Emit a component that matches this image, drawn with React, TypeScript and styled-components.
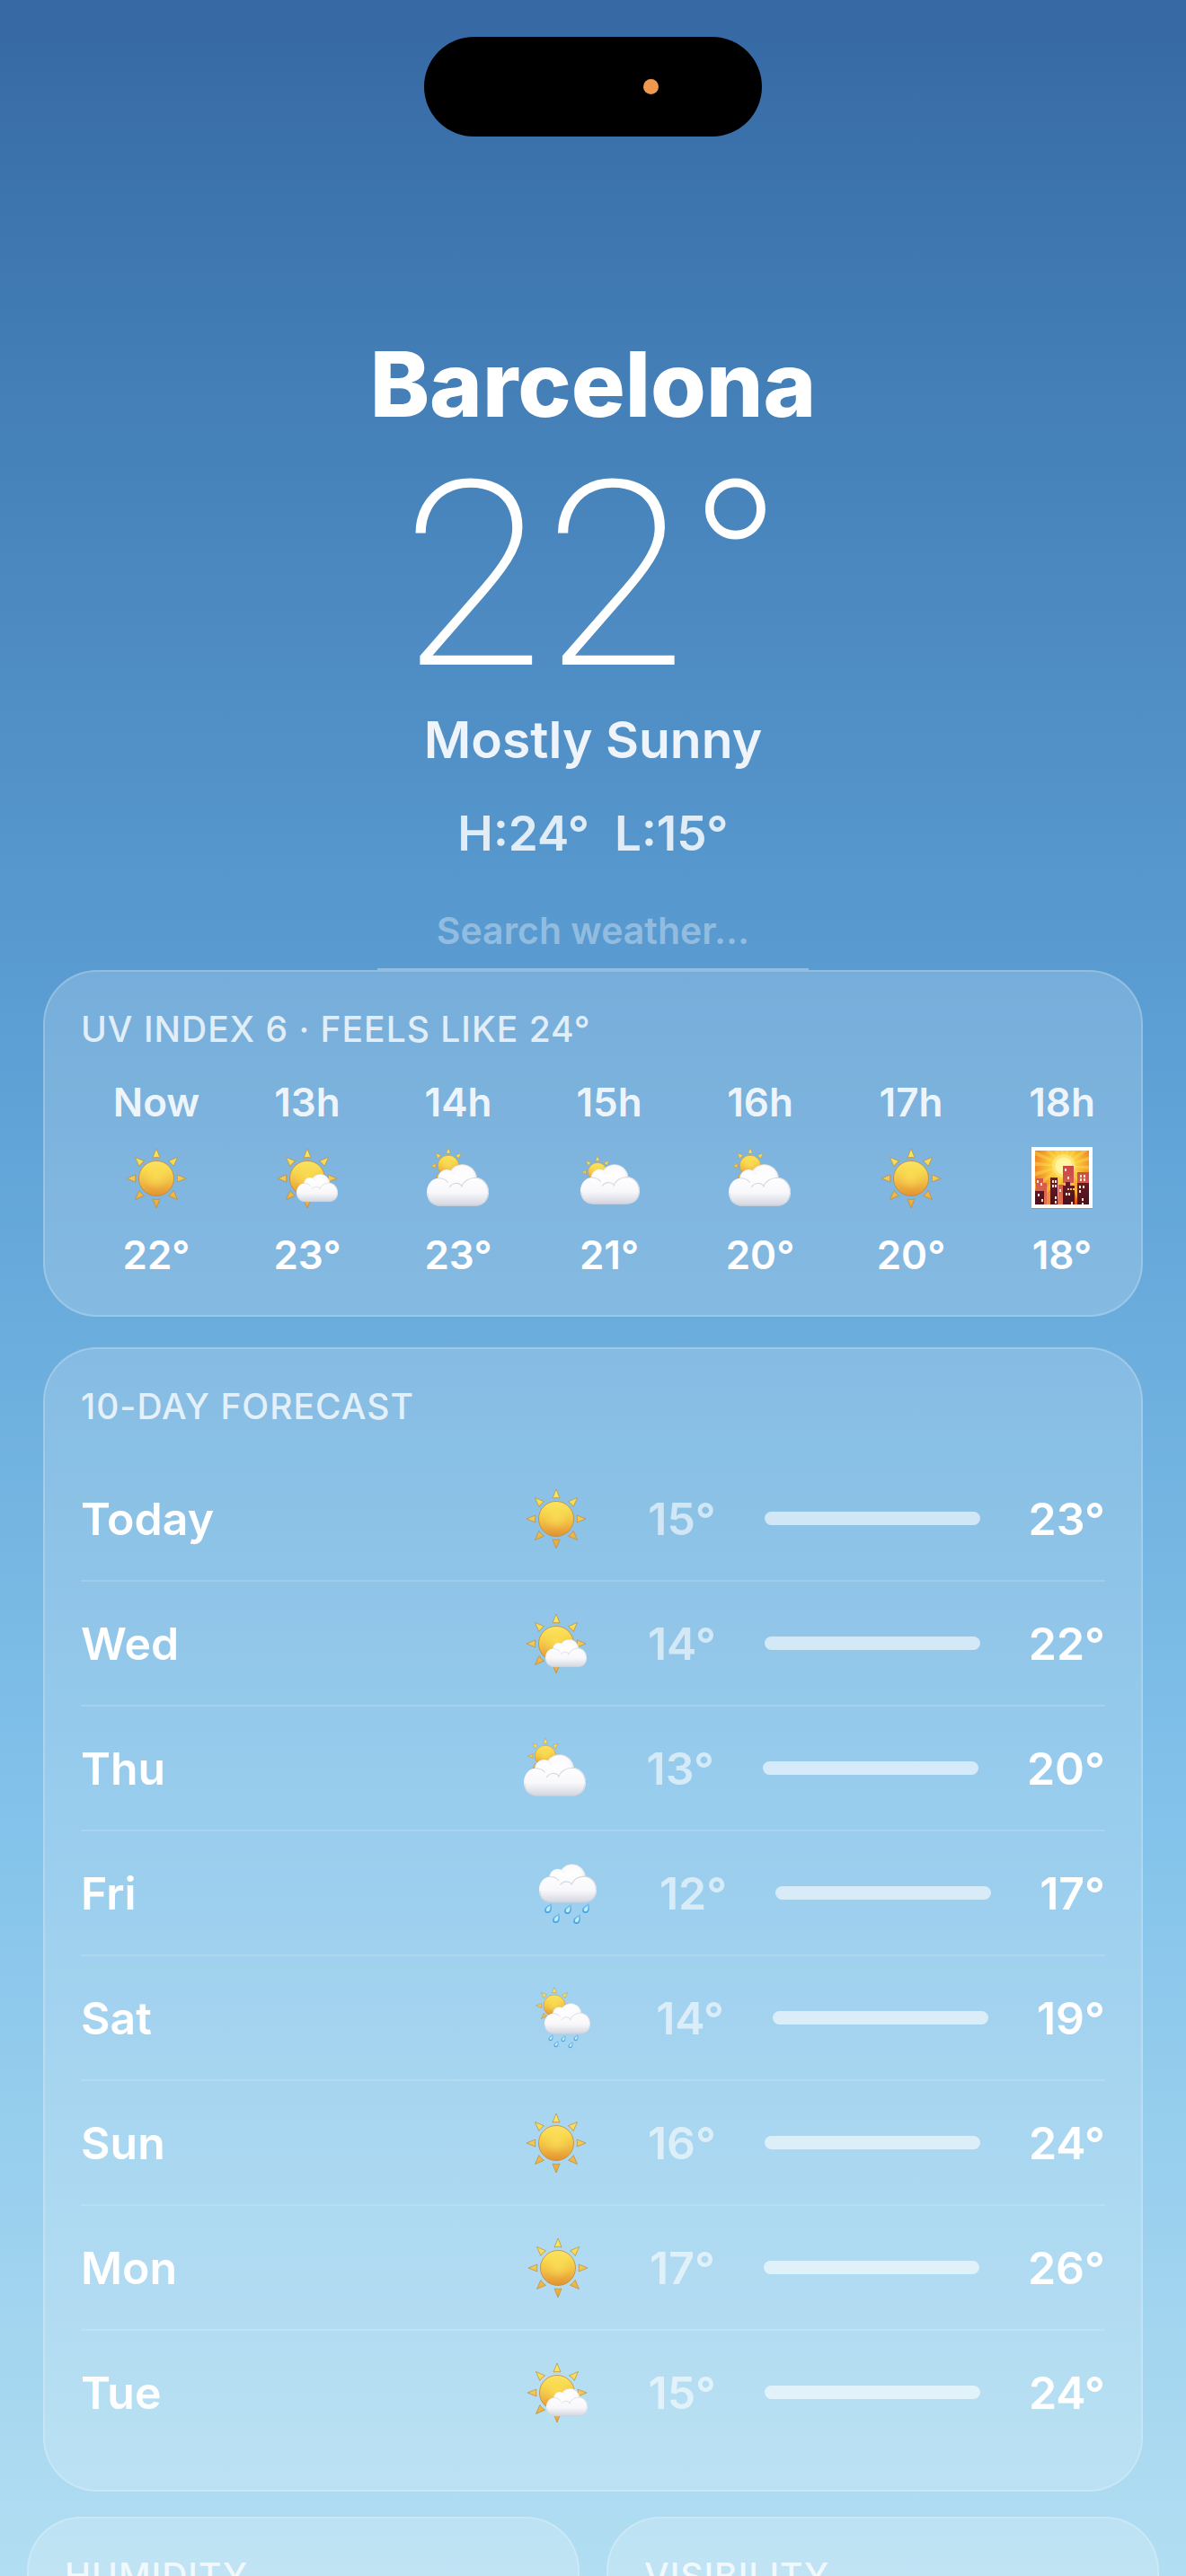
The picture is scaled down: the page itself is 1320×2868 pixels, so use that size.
import React from "react";
import styled, { createGlobalStyle } from "styled-components";

type Condition = "sunny" | "mostlySunny" | "partlyCloudy" | "mostlyCloudy" | "rain" | "showers" | "sunset";

const hourly: { time: string; condition: Condition; temp: number }[] = [
  { time: "Now", condition: "sunny", temp: 22 },
  { time: "13h", condition: "mostlySunny", temp: 23 },
  { time: "14h", condition: "partlyCloudy", temp: 23 },
  { time: "15h", condition: "mostlyCloudy", temp: 21 },
  { time: "16h", condition: "partlyCloudy", temp: 20 },
  { time: "17h", condition: "sunny", temp: 20 },
  { time: "18h", condition: "sunset", temp: 18 },
];

const daily: { day: string; condition: Condition; low: number; high: number }[] = [
  { day: "Today", condition: "sunny", low: 15, high: 23 },
  { day: "Wed", condition: "mostlySunny", low: 14, high: 22 },
  { day: "Thu", condition: "partlyCloudy", low: 13, high: 20 },
  { day: "Fri", condition: "rain", low: 12, high: 17 },
  { day: "Sat", condition: "showers", low: 14, high: 19 },
  { day: "Sun", condition: "sunny", low: 16, high: 24 },
  { day: "Mon", condition: "sunny", low: 17, high: 26 },
  { day: "Tue", condition: "mostlySunny", low: 15, high: 24 },
];

const GlobalStyle = createGlobalStyle`
  *, *::before, *::after { box-sizing: border-box; }
  body {
    margin: 0;
    font-family: Inter, "Liberation Sans", sans-serif;
    color: #fff;
  }
  h1, h2, p, ul { margin: 0; padding: 0; }
  ul { list-style: none; }
`;

const Screen = styled.div`
  height: 100vh;
  overflow-x: hidden;
  overflow-y: auto;
  scrollbar-width: none;
  background: linear-gradient(180deg, #3668a3 0%, #3e77b0 9%, #5c9fd4 40%, #82c2ea 70%, #b2def2 100%);
`;

const StatusBar = styled.div`
  display: flex;
  justify-content: center;
  padding-top: 41px;
`;

const Island = styled.div`
  display: flex;
  align-items: center;
  justify-content: flex-end;
  width: 376px;
  height: 111px;
  padding-right: 115px;
  border-radius: 56px;
  background: #000;
`;

const MicDot = styled.span`
  width: 17px;
  height: 17px;
  border-radius: 50%;
  background: #f0984e;
`;

const Header = styled.header`
  display: flex;
  flex-direction: column;
  align-items: center;
  padding-top: 216px;
`;

const City = styled.h1`
  font-size: 100px;
  line-height: 120px;
  font-weight: 800;
`;

const CurrentTemp = styled.p`
  margin-top: 4px;
  font-family: Roboto, Inter, sans-serif;
  font-size: 288px;
  line-height: 300px;
  font-weight: 200;
`;

const Summary = styled.p`
  margin-top: -4px;
  font-size: 57px;
  line-height: 72px;
  font-weight: 600;
  color: rgba(255, 255, 255, 0.9);
`;

const HighLow = styled.p`
  display: flex;
  gap: 28px;
  margin-top: 36px;
  font-size: 53px;
  line-height: 64px;
  font-weight: 600;
  color: rgba(255, 255, 255, 0.82);
`;

const SearchInput = styled.input`
  width: 480px;
  height: 86px;
  margin-top: 34px;
  padding: 0;
  border: 0;
  border-bottom: 2px solid rgba(255, 255, 255, 0.35);
  border-radius: 0;
  background: transparent;
  outline: none;
  font: 600 41px Inter, "Liberation Sans", sans-serif;
  color: #fff;
  text-align: center;

  &::placeholder {
    color: rgba(255, 255, 255, 0.36);
    opacity: 1;
  }
`;

const Panels = styled.main`
  display: flex;
  flex-direction: column;
  gap: 34px;
  padding: 0 48px;
`;

const Card = styled.section`
  padding: 40px;
  border: 2px solid rgba(255, 255, 255, 0.2);
  border-radius: 60px;
  background: rgba(255, 255, 255, 0.18);
`;

const CardTitle = styled.h2`
  font-size: 39px;
  line-height: 48px;
  font-weight: 500;
  letter-spacing: 1px;
  color: rgba(255, 255, 255, 0.8);
`;

const HourList = styled.ul`
  display: flex;
  justify-content: space-between;
  margin-top: 30px;
  padding-left: 36px;
`;

const Hour = styled.li`
  display: flex;
  flex-direction: column;
  align-items: center;
  gap: 22px;
  width: 96px;
  font-size: 44px;
  line-height: 54px;
  font-weight: 600;
`;

const HourTime = styled.span`
  color: rgba(255, 255, 255, 0.9);
`;

const HourTemp = styled.span`
  color: #fff;
`;

const DayList = styled.ul`
  margin-top: 32px;
`;

const DayRow = styled.li`
  display: flex;
  align-items: center;
  gap: 54px;
  height: 139px;
  border-bottom: 2px solid rgba(255, 255, 255, 0.15);
  font-size: 50px;
  line-height: 60px;
  font-weight: 600;

  &:last-child {
    height: 137px;
    border-bottom: 0;
  }
`;

const DayName = styled.span`
  flex: 1;
`;

const DayIcon = styled.span`
  display: flex;
  justify-content: center;
  width: 96px;
`;

const Low = styled.span`
  color: rgba(255, 255, 255, 0.6);
`;

const RangeBar = styled.span`
  width: 240px;
  height: 15px;
  border-radius: 8px;
  background: rgba(255, 255, 255, 0.6);
`;

const Tiles = styled.div`
  display: grid;
  grid-template-columns: 1fr 1fr;
  gap: 30px;
  padding: 28px 30px 48px;
`;

const Tile = styled(Card)`
  min-height: 360px;
`;

const Glyph = styled.svg`
  display: block;
  width: 72px;
  height: 72px;
`;

const SharedDefs = styled.svg`
  position: absolute;
  width: 0;
  height: 0;
`;

const Gradients = () => (
  <SharedDefs aria-hidden="true">
    <defs>
      <linearGradient id="sunDisc" x1="0" y1="0" x2="0" y2="1">
        <stop offset="0" stopColor="#fbe36a" />
        <stop offset="0.25" stopColor="#f8da4e" />
        <stop offset="0.6" stopColor="#f1bd45" />
        <stop offset="1" stopColor="#e3922f" />
      </linearGradient>
      <radialGradient id="sunGlow" cx="0.5" cy="0.42" r="0.4">
        <stop offset="0" stopColor="#fbdf55" stopOpacity="0.8" />
        <stop offset="1" stopColor="#fbdf55" stopOpacity="0" />
      </radialGradient>
      <linearGradient id="sunRays" gradientUnits="userSpaceOnUse" x1="0" y1="-33" x2="0" y2="33">
        <stop offset="0" stopColor="#f9ec62" />
        <stop offset="0.5" stopColor="#f3c853" />
        <stop offset="1" stopColor="#eba93c" />
      </linearGradient>
      <radialGradient id="puff" cx="0.5" cy="0.42" r="0.58">
        <stop offset="0" stopColor="#ffffff" />
        <stop offset="0.65" stopColor="#fbfbfd" />
        <stop offset="1" stopColor="#dddfe8" />
      </radialGradient>
      <linearGradient id="cloudBase" x1="0" y1="0" x2="0" y2="1">
        <stop offset="0" stopColor="#ffffff" />
        <stop offset="0.6" stopColor="#f8f8fb" />
        <stop offset="1" stopColor="#d3d5df" />
      </linearGradient>
      <linearGradient id="drop" x1="0" y1="0" x2="0" y2="1">
        <stop offset="0" stopColor="#74c3f2" />
        <stop offset="1" stopColor="#3f9fe4" />
      </linearGradient>
      <radialGradient id="duskSky" cx="0.53" cy="0.28" r="0.75">
        <stop offset="0" stopColor="#fff27a" />
        <stop offset="0.35" stopColor="#fbc83a" />
        <stop offset="0.7" stopColor="#f08a24" />
        <stop offset="1" stopColor="#dd4e1c" />
      </radialGradient>
      <linearGradient id="towerFar" x1="0" y1="0" x2="0" y2="1">
        <stop offset="0" stopColor="#c8474a" />
        <stop offset="1" stopColor="#e5714f" />
      </linearGradient>
      <linearGradient id="towerNear" x1="0" y1="0" x2="0" y2="1">
        <stop offset="0" stopColor="#6b1c2b" />
        <stop offset="1" stopColor="#48101c" />
      </linearGradient>
    </defs>
  </SharedDefs>
);

const Sun = ({ x = 0, y = 0, scale = 1 }: { x?: number; y?: number; scale?: number }) => (
  <g transform={`translate(${x} ${y}) scale(${scale})`}>
    <path
      d="M0-33L4-23Q0-24-4-23Z M0 33L4 23Q0 24-4 23Z M-33 0L-23-4Q-24 0-23 4Z M33 0L23-4Q24 0 23 4Z M-23.5-23.5L-13.5-19.2Q-17-17-19.2-13.5Z M23.5-23.5L13.5-19.2Q17-17 19.2-13.5Z M-23.5 23.5L-13.5 19.2Q-17 17-19.2 13.5Z M23.5 23.5L13.5 19.2Q17 17 19.2 13.5Z"
      fill="url(#sunRays)"
      stroke="#bd8b37"
      strokeWidth="0.7"
      strokeLinejoin="round"
    />
    <circle r="19.5" fill="url(#sunDisc)" stroke="#c58732" strokeWidth="0.8" />
    <circle r="19" fill="url(#sunGlow)" />
  </g>
);

/* The cloud is drawn on a 68 x 46 field and scaled to the width it needs. */
const Cloud = ({ x, y, width }: { x: number; y: number; width: number }) => (
  <g transform={`translate(${x} ${y}) scale(${width / 68})`}>
    <circle cx="39" cy="16.5" r="16" fill="url(#puff)" stroke="#d0d3dd" strokeWidth="0.5" />
    <circle cx="22" cy="16" r="10" fill="url(#puff)" />
    <path
      d="M15 46C5 46 0 39 0 31C0 23 5 16 12.500 15.500C15 10 22 8 28 12C34 10 41 12 44 17C47 15 50 14.500 53 14.500C62 15 68 22 68 31C68 40 62 46 53 46Z"
      fill="url(#cloudBase)"
    />
    <path d="M12.500 15.500C17 15.500 21 17 23 20M67.500 31C67.500 22 61 15 53 15C45 15.500 40 20 38 25M25 25C29 20 35 20 39 24" fill="none" stroke="#d5d8e1" strokeWidth="1.1" strokeLinecap="round" />
    <path d="M1 32C1 40 7 45.500 15 45.500H53C62 45.500 67 39 67 32" fill="none" stroke="#c9ccd8" strokeWidth="0.9" opacity="0.8" />
  </g>
);

const Drops = ({ points, scale = 1 }: { points: [number, number][]; scale?: number }) => (
  <>
    {points.map(([x, y]) => (
      <g key={`${x},${y}`} transform={`translate(${x} ${y}) scale(${scale})`}>
        <path d="M3.500-6C4.500-1 4.300 5-0.500 5C-4 5-4.800 1.500-3-1C-1.500-3 1.500-4 3.500-6Z" fill="url(#drop)" />
        <path d="M2.200-3.500C2.800 0 2 3.200-0.500 3.200C-2.600 3.200-2.400 0.500-1-1C0-2 1.200-2.400 2.200-3.500Z" fill="#c3ecfb" />
      </g>
    ))}
  </>
);

const rays = Array.from({ length: 18 }, (_, i) => {
  const a = (i * Math.PI) / 9;
  const b = a + 0.14;
  return `M2-14L${2 + 60 * Math.cos(a)} ${-14 + 60 * Math.sin(a)}L${2 + 60 * Math.cos(b)} ${-14 + 60 * Math.sin(b)}Z`;
}).join("");

const CitySunset = () => (
  <>
    <rect x="-34" y="-34" width="68" height="68" fill="#7d7f86" opacity="0.5" />
    <rect x="-34" y="-35" width="68" height="68" fill="#fff" />
    <svg x="-30" y="-31" width="60" height="60" viewBox="-30 -31 60 60">
      <rect x="-30" y="-31" width="60" height="60" fill="url(#duskSky)" />
      <path d={rays} fill="#fde35a" opacity="0.4" />
      <circle cx="2" cy="-14" r="13" fill="#fff08a" opacity="0.5" />
      <circle cx="2" cy="-14" r="9.500" fill="#fff5a3" />
      <path d="M-29 0H-21V5H-17V30H-29Z M-4 7H2V30H-4Z M1-14H13V5H1Z M17-7H30V8H17Z" fill="url(#towerFar)" />
      <path d="M-30 14H-20V30H-30Z M-13-1H-5V30H-13Z M1 8H4V4H9V8H14V30H1Z M17 5H30V30H17Z" fill="url(#towerNear)" />
      <path d="M-17 16H-13V30H-17Z" fill="#ef8b48" />
      <path
        d="M3-11h2v3h-2z M6-2h2v3h-2z M20-4h2v3h-2z M24-4h2v3h-2z M20 0h2v3h-2z M24 0h2v3h-2z M-11 2h2v3h-2z M-8 2h2v3h-2z M-11 7h2v3h-2z M-8 7h2v3h-2z M-27 17h2v3h-2z M-23 23h2v3h-2z M-8 20h2v3h-2z M-8 25h2v3h-2z M4 16h2v3h-2z M7 16h2v3h-2z M10 26h2v3h-2z M19 8h2v3h-2z M23 8h2v3h-2z M19 13h2v3h-2z M22 22h2v3h-2z M22 27h2v2h-2z M-28 2h2v3h-2z M-24 5h2v3h-2z M-3 12h2v3h-2z"
        fill="#ffe2c4"
      />
      <path d="M6 11h2v2h-2z M9 11h2v2h-2z M12 11h2v2h-2z" fill="#f6c34a" />
    </svg>
  </>
);

const drawings: Record<Condition, React.ReactNode> = {
  sunny: <Sun />,
  mostlySunny: (
    <>
      <Sun />
      <Cloud x={-12} y={-5} width={46} />
    </>
  ),
  partlyCloudy: (
    <>
      <Sun x={-11} y={-14} scale={0.6} />
      <Cloud x={-35} y={-16} width={69} />
    </>
  ),
  mostlyCloudy: (
    <>
      <Sun x={-13} y={-7} scale={0.54} />
      <Cloud x={-32} y={-16} width={66} />
    </>
  ),
  rain: (
    <>
      <Cloud x={-32} y={-33} width={64} />
      <Drops points={[[-22, 17], [0, 18], [20, 17], [-13, 28], [10, 29]]} />
    </>
  ),
  showers: (
    <>
      <Sun x={-11} y={-14} scale={0.62} />
      <Cloud x={-22} y={-17} width={51} />
      <Drops points={[[-15, 22], [-1, 23], [13, 22], [-9, 29], [7, 30]]} scale={0.65} />
    </>
  ),
  sunset: <CitySunset />,
};

const WeatherIcon = ({ condition }: { condition: Condition }) => (
  <Glyph viewBox="-36 -36 72 72" aria-hidden="true">
    {drawings[condition]}
  </Glyph>
);

export default function App() {
  return (
    <Screen>
      <GlobalStyle />
      <Gradients />
      <StatusBar>
        <Island>
          <MicDot />
        </Island>
      </StatusBar>
      <Header>
        <City>Barcelona</City>
        <CurrentTemp>22°</CurrentTemp>
        <Summary>Mostly Sunny</Summary>
        <HighLow>
          <span>H:24°</span>
          <span>L:15°</span>
        </HighLow>
        <SearchInput type="text" placeholder="Search weather..." aria-label="Search weather..." />
      </Header>
      <Panels>
        <Card>
          <CardTitle>UV INDEX 6 · FEELS LIKE 24°</CardTitle>
          <HourList>
            {hourly.map((hour) => (
              <Hour key={hour.time}>
                <HourTime>{hour.time}</HourTime>
                <WeatherIcon condition={hour.condition} />
                <HourTemp>{hour.temp}°</HourTemp>
              </Hour>
            ))}
          </HourList>
        </Card>
        <Card>
          <CardTitle>10-DAY FORECAST</CardTitle>
          <DayList>
            {daily.map((row) => (
              <DayRow key={row.day}>
                <DayName>{row.day}</DayName>
                <DayIcon>
                  <WeatherIcon condition={row.condition} />
                </DayIcon>
                <Low>{row.low}°</Low>
                <RangeBar />
                <span>{row.high}°</span>
              </DayRow>
            ))}
          </DayList>
        </Card>
      </Panels>
      <Tiles>
        <Tile>
          <CardTitle>HUMIDITY</CardTitle>
        </Tile>
        <Tile>
          <CardTitle>VISIBILITY</CardTitle>
        </Tile>
      </Tiles>
    </Screen>
  );
}
